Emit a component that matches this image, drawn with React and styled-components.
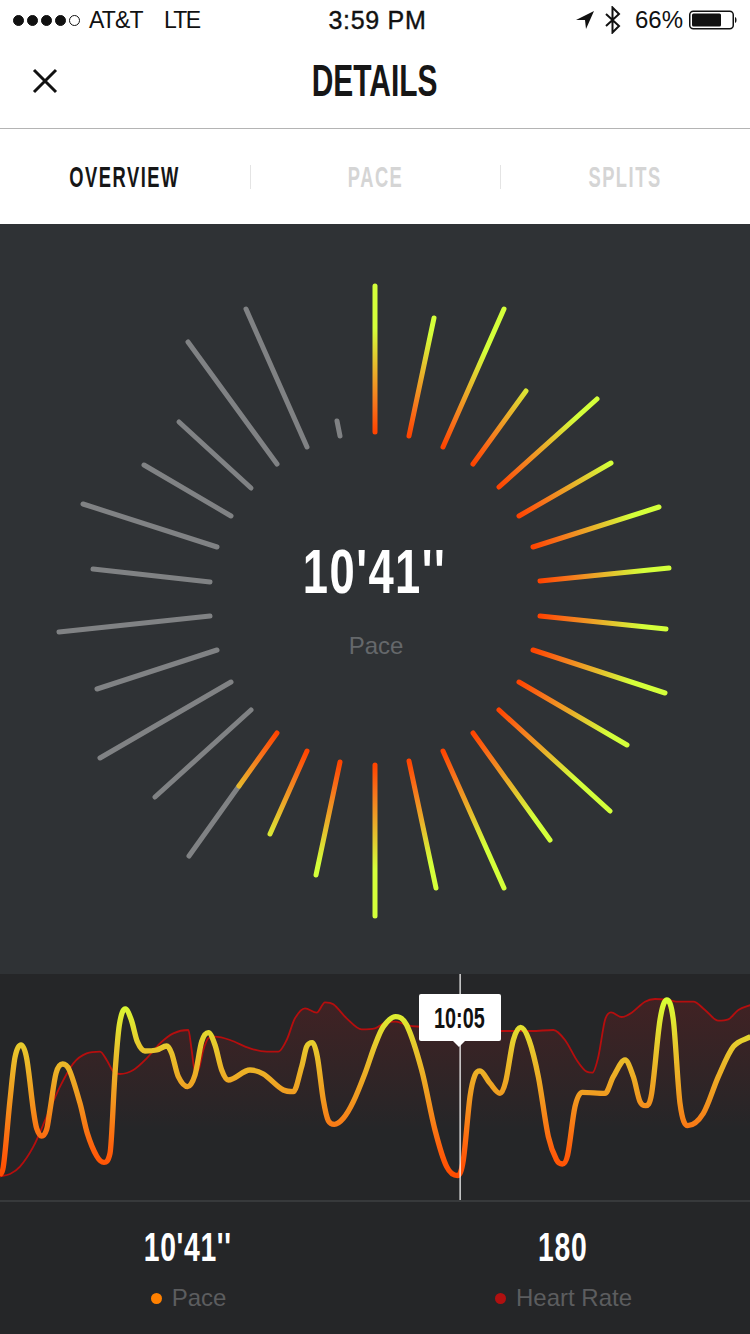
import React from "react";
import styled, { createGlobalStyle } from "styled-components";

const Global = createGlobalStyle`
  html, body { margin: 0; padding: 0; background: #fff; }
  * { box-sizing: border-box; }
`;

const SANS = `"Liberation Sans", Arial, sans-serif`;

const Page = styled.div`
  width: 750px;
  height: 1334px;
  display: flex;
  flex-direction: column;
  overflow: hidden;
  font-family: ${SANS};
`;

const StatusBar = styled.div`
  height: 40px;
  padding: 0 12px 0 13px;
  display: grid;
  grid-template-columns: 1fr auto 1fr;
  align-items: center;
  color: #111;
  font-size: 24px;
`;
const StatusLeft = styled.div`
  display: flex;
  align-items: center;
  font-size: 23px;
`;
const Dots = styled.div`
  display: flex;
  gap: 3px;
  margin-right: 9px;
`;
const SignalDot = styled.span`
  width: 11px;
  height: 11px;
  border-radius: 50%;
  background: ${(p) => (p.$on ? "#111" : "transparent")};
  border: 1px solid #111;
`;
const Carrier = styled.span`
  letter-spacing: -0.8px;
`;
const Network = styled.span`
  margin-left: 21px;
  letter-spacing: -1.6px;
`;
const Clock = styled.div`
  padding-left: 4px;
  font-weight: 400;
  font-size: 25px;
  letter-spacing: 0.7px;
  -webkit-text-stroke: 0.4px #111;
`;
const StatusRight = styled.div`
  display: flex;
  align-items: center;
  justify-content: flex-end;
`;
const BluetoothIcon = styled.svg`
  margin-left: 10px;
`;
const Percent = styled.span`
  margin: 0 6px 0 13px;
`;

const NavBar = styled.div`
  height: 89px;
  position: relative;
  display: flex;
  align-items: center;
  justify-content: center;
  border-bottom: 1px solid #b4b4b4;
  padding-bottom: 7px;
`;
const CloseButton = styled.svg`
  position: absolute;
  left: 31px;
  top: 27px;
`;
const Title = styled.div`
  font-weight: 700;
  font-size: 45px;
  line-height: 1;
  color: #161616;
  transform: scaleX(0.665);
`;

const Tabs = styled.div`
  height: 95px;
  display: grid;
  grid-template-columns: repeat(3, 1fr);
  align-items: center;
  background: #fff;
`;
const Tab = styled.div`
  height: 24px;
  display: flex;
  align-items: center;
  justify-content: center;
  border-left: ${(p) => (p.$divider ? "1px solid #e4e4e4" : "none")};
`;
const TabLabel = styled.span`
  font-weight: 700;
  font-size: 30px;
  line-height: 1;
  letter-spacing: 2.5px;
  color: ${(p) => (p.$active ? "#161616" : "#d5d5d5")};
  transform: scaleX(0.61);
`;

const Dial = styled.div`
  height: 750px;
  position: relative;
  background: #2f3235;
`;
const DialArt = styled.svg`
  display: block;
`;
const DialCenter = styled.div`
  position: absolute;
  left: 0;
  right: 0;
  top: 311px;
  display: flex;
  flex-direction: column;
  align-items: center;
`;
const BigValue = styled.div`
  font-weight: 700;
  font-size: 63px;
  line-height: 72px;
  letter-spacing: 2px;
  color: #fff;
  transform: scaleX(0.72);
`;
const DialLabel = styled.div`
  margin-top: 25px;
  padding-left: 2px;
  font-size: 24px;
  line-height: 28px;
  color: #65686b;
`;

const ChartWrap = styled.div`
  height: 226px;
  position: relative;
  background: #252628;
`;
const ChartArt = styled.svg`
  display: block;
`;
const Tooltip = styled.div`
  position: absolute;
  left: 419px;
  top: 20px;
  width: 82px;
  height: 47px;
  background: #fff;
  border-radius: 2px;
  display: flex;
  align-items: center;
  justify-content: center;
  &::after {
    content: "";
    position: absolute;
    left: 34px;
    bottom: -6px;
    border-left: 6px solid transparent;
    border-right: 6px solid transparent;
    border-top: 6px solid #fff;
  }
`;
const TooltipText = styled.span`
  font-weight: 700;
  font-size: 30px;
  line-height: 1;
  color: #111;
  transform: translateX(-1px) scaleX(0.66);
`;

const Footer = styled.div`
  flex: 1;
  display: grid;
  grid-template-columns: 1fr 1fr;
  background: #252628;
  border-top: 2px solid #37393b;
`;
const Stat = styled.div`
  display: flex;
  flex-direction: column;
  align-items: center;
  padding-top: 22px;
`;
const StatValue = styled.div`
  font-weight: 700;
  font-size: 41px;
  line-height: 46px;
  letter-spacing: 1px;
  color: #fff;
  transform: scaleX(0.69);
`;
const StatLabel = styled.div`
  margin-top: 14px;
  padding-left: 2px;
  display: flex;
  align-items: center;
  gap: 10px;
  font-size: 24px;
  line-height: 28px;
  color: #5c5d5f;
`;
const LegendDot = styled.span`
  width: 11px;
  height: 11px;
  border-radius: 50%;
  background: ${(p) => p.$color};
`;

/* inner x,y -> outer x,y, in page pixels */
const COLOR_RAYS = [
  [375, 432, 375, 286], [409, 436, 434, 318], [443, 447, 504, 309], [473, 464, 526, 391],
  [499, 487, 597, 399], [519, 516, 611, 463], [533, 547, 659, 507], [540, 581, 669, 568],
  [540, 616, 666, 629], [533, 650, 665, 693], [519, 682, 627, 745], [499, 710, 610, 811],
  [473, 733, 550, 840], [443, 751, 504, 888], [409, 761, 436, 888], [375, 765, 375, 916],
  [340, 762, 316, 875], [307, 751, 270, 834], [277, 733, 239, 786],
];
const GREY_RAYS = [
  [239, 786, 189, 856], [251, 710, 155, 797], [231, 682, 100, 758], [217, 650, 97, 689],
  [210, 616, 59, 632], [210, 582, 93, 569], [217, 547, 83, 504], [231, 516, 144, 465],
  [251, 488, 179, 422], [277, 464, 188, 342], [307, 447, 246, 309], [340, 436, 337, 421],
];
const RAY_TOP = 224;
const FULL_LIME = 104;

/* chart points on a 3x grid; the second half is offset by 1125 */
const right = (pts) => pts.map(([x, y]) => [x + 1125, y]);
const PACE = [
  [-2, 617], [10, 590], [30, 390], [45, 262], [63, 225], [80, 265], [100, 420], [110, 475], [125, 498], [140, 478], [150, 420],
  [168, 310], [188, 282], [208, 300],
  [240, 400], [262, 490], [290, 558], [312, 577], [330, 550], [345, 310], [358, 165], [376, 117], [394, 150], [412, 215], [435, 243], [470, 240], [500, 228],
  [515, 250], [535, 320], [563, 350], [585, 315], [605, 215], [625, 188], [645, 225], [665, 300], [685, 330], [750, 300], [790, 312], [850, 360],
  [880, 365], [905, 290], [920, 230], [937, 218], [952, 260], [970, 390], [985, 452], [1003, 463], [1030, 445], [1060, 395], [1095, 310],
  ...right([
    [0, 225], [25, 170], [62, 140], [95, 165], [140, 300], [180, 480], [215, 590], [248, 617], [265, 570], [285, 380], [300, 315], [315, 303], [345, 340],
    [375, 370], [392, 335], [415, 210], [437, 172], [462, 210], [490, 320], [520, 500], [545, 570], [562, 582], [578, 555], [600, 410], [622, 367], [690, 370], [715, 320], [750, 270],
    [775, 320], [795, 395], [812, 407], [830, 370], [855, 150], [875, 90], [895, 150], [915, 400], [938, 467], [985, 430], [1030, 320], [1075, 230], [1127, 200],
  ]),
];
const HEART = [
  [-2, 620], [30, 612], [60, 590], [100, 530], [140, 440], [180, 350], [220, 280], [260, 250], [300, 245], [320, 270], [340, 305],
  [360, 312], [400, 300], [440, 265], [480, 220], [520, 190], [565, 180], [575, 240], [585, 305], [595, 300], [610, 240], [625, 205],
  [645, 200], [690, 210], [750, 235], [800, 245], [835, 245], [860, 210], [885, 145], [915, 115], [950, 128], [975, 97], [1000, 103],
  [1040, 145], [1085, 178],
  ...right([
    [0, 175], [30, 158], [62, 155], [100, 167], [135, 170], [380, 183], [470, 183], [535, 180], [570, 210], [605, 270], [635, 305],
    [652, 308], [670, 260], [690, 150], [708, 127], [740, 141], [770, 128], [810, 95], [840, 87], [880, 90], [910, 95], [955, 95],
    [990, 120], [1030, 152], [1060, 148], [1090, 120], [1127, 105],
  ]),
];

/* Smooth spline: central-difference tangents, flat at every local peak and trough. */
function smoothPath(pts) {
  const n = pts.length;
  const dy = [], m = [];
  for (let i = 0; i < n - 1; i++) dy[i] = (pts[i + 1][1] - pts[i][1]) / (pts[i + 1][0] - pts[i][0]);
  m[0] = dy[0];
  m[n - 1] = dy[n - 2];
  for (let i = 1; i < n - 1; i++) {
    if (dy[i - 1] * dy[i] <= 0) {
      m[i] = 0;
    } else {
      const c = (pts[i + 1][1] - pts[i - 1][1]) / (pts[i + 1][0] - pts[i - 1][0]);
      const lim = 3 * Math.min(Math.abs(dy[i - 1]), Math.abs(dy[i]));
      m[i] = Math.sign(c) * Math.min(Math.abs(c), lim);
    }
  }
  let d = `M${pts[0][0]} ${pts[0][1]}`;
  for (let i = 0; i < n - 1; i++) {
    const h = (pts[i + 1][0] - pts[i][0]) / 3;
    d += `C${pts[i][0] + h} ${pts[i][1] + m[i] * h} ${pts[i + 1][0] - h} ${pts[i + 1][1] - m[i + 1] * h} ${pts[i + 1][0]} ${pts[i + 1][1]}`;
  }
  return d;
}

const RayStops = () => (
  <>
    <stop offset="0" stopColor="#ff4400" />
    <stop offset="0.25" stopColor="#f8701a" />
    <stop offset="0.55" stopColor="#eba828" />
    <stop offset="1" stopColor="#d4ff3a" />
  </>
);

function DialRays() {
  return (
    <DialArt width="750" height="750" viewBox={`0 ${RAY_TOP} 750 750`}>
      <defs>
        {COLOR_RAYS.map(([x1, y1, x2, y2], i) => {
          const len = Math.hypot(x2 - x1, y2 - y1);
          return (
            <linearGradient
              key={i}
              id={`ray${i}`}
              gradientUnits="userSpaceOnUse"
              x1={x1}
              y1={y1}
              x2={x1 + ((x2 - x1) / len) * FULL_LIME}
              y2={y1 + ((y2 - y1) / len) * FULL_LIME}
            >
              <RayStops />
            </linearGradient>
          );
        })}
      </defs>
      {GREY_RAYS.map(([x1, y1, x2, y2], i) => (
        <line key={i} x1={x1} y1={y1} x2={x2} y2={y2} stroke="#808284" strokeWidth="5" strokeLinecap="round" />
      ))}
      {COLOR_RAYS.map(([x1, y1, x2, y2], i) => (
        <line key={i} x1={x1} y1={y1} x2={x2} y2={y2} stroke={`url(#ray${i})`} strokeWidth="5" strokeLinecap="round" />
      ))}
    </DialArt>
  );
}

function Chart() {
  const heart = smoothPath(HEART);
  return (
    <ChartArt width="750" height="226" viewBox="0 12 2250 678">
      <defs>
        <linearGradient id="paceLine" gradientUnits="userSpaceOnUse" x1="0" y1="90" x2="0" y2="617">
          <stop offset="0" stopColor="#d8ff34" />
          <stop offset="0.28" stopColor="#e8c52c" />
          <stop offset="0.55" stopColor="#f09a20" />
          <stop offset="0.85" stopColor="#ff600c" />
          <stop offset="1" stopColor="#ff4c00" />
        </linearGradient>
        <linearGradient id="heartFill" gradientUnits="userSpaceOnUse" x1="0" y1="90" x2="0" y2="480">
          <stop offset="0" stopColor="#b01212" stopOpacity="0.2" />
          <stop offset="1" stopColor="#b01212" stopOpacity="0" />
        </linearGradient>
      </defs>
      <path d={`${heart}L2252 690L-2 690Z`} fill="url(#heartFill)" />
      <path d={heart} fill="none" stroke="#b50e0e" strokeWidth="5.5" />
      <path d={smoothPath(PACE)} fill="none" stroke="url(#paceLine)" strokeWidth="16" strokeLinejoin="round" />
      <rect x="1378" y="12" width="5" height="678" fill="#fff" fillOpacity="0.72" />
    </ChartArt>
  );
}

export default function App() {
  return (
    <Page>
      <Global />
      <StatusBar>
        <StatusLeft>
          <Dots>
            {[1, 1, 1, 1, 0].map((on, i) => (
              <SignalDot key={i} $on={!!on} />
            ))}
          </Dots>
          <Carrier>AT&amp;T</Carrier>
          <Network>LTE</Network>
        </StatusLeft>
        <Clock>3:59 PM</Clock>
        <StatusRight>
          <svg width="18" height="18" viewBox="0 0 18 18">
            <path d="M18 0 L0 9 L9 9 L10 18 Z" fill="#111" />
          </svg>
          <BluetoothIcon width="18" height="28" viewBox="0 0 18 28">
            <path d="M2 8 L15 20 L8.5 26.5 V1.5 L15 8 L2 20" fill="none" stroke="#111" strokeWidth="2" />
          </BluetoothIcon>
          <Percent>66%</Percent>
          <svg width="49" height="20" viewBox="0 0 49 20">
            <rect x="0.75" y="1.25" width="43.5" height="17.5" rx="3.5" fill="none" stroke="#111" strokeWidth="1.5" />
            <rect x="3" y="3.5" width="29" height="13" rx="1.5" fill="#111" />
            <path d="M46 7 C48 7.5 48 12.5 46 13 Z" fill="#111" />
          </svg>
        </StatusRight>
      </StatusBar>

      <NavBar>
        <CloseButton width="28" height="28" viewBox="0 0 28 28">
          <path d="M3 3 L25 25 M25 3 L3 25" stroke="#111" strokeWidth="3" fill="none" />
        </CloseButton>
        <Title>DETAILS</Title>
      </NavBar>

      <Tabs>
        <Tab>
          <TabLabel $active>OVERVIEW</TabLabel>
        </Tab>
        <Tab $divider>
          <TabLabel>PACE</TabLabel>
        </Tab>
        <Tab $divider>
          <TabLabel>SPLITS</TabLabel>
        </Tab>
      </Tabs>

      <Dial>
        <DialRays />
        <DialCenter>
          <BigValue>10'41''</BigValue>
          <DialLabel>Pace</DialLabel>
        </DialCenter>
      </Dial>

      <ChartWrap>
        <Chart />
        <Tooltip>
          <TooltipText>10:05</TooltipText>
        </Tooltip>
      </ChartWrap>

      <Footer>
        <Stat>
          <StatValue>10'41''</StatValue>
          <StatLabel>
            <LegendDot $color="#ff8000" />
            Pace
          </StatLabel>
        </Stat>
        <Stat>
          <StatValue>180</StatValue>
          <StatLabel>
            <LegendDot $color="#b01010" />
            Heart Rate
          </StatLabel>
        </Stat>
      </Footer>
    </Page>
  );
}
